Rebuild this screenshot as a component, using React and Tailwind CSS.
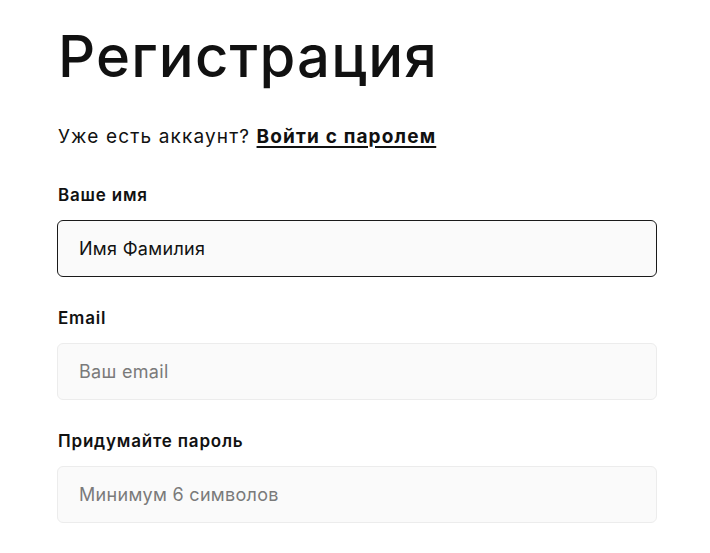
import React from "react";

const field =
  "w-full h-[57px] rounded-[6px] bg-[#fafafa] px-[21px] text-[18px] tracking-[0.3px] text-[#111] placeholder:text-[#7a7a7a] outline-none";

export default function App() {
  return (
    <div className="min-h-screen bg-white font-['Inter','Liberation_Sans',sans-serif] text-[#111]">
      <div className="w-[600px] ml-[57px] pt-[18px]">
        {/* Заголовок */}
        <h1 className="text-[58px] leading-[76px] font-medium tracking-[1.2px] pl-[1px]">
          Регистрация
        </h1>

        <p className="mt-[31px] text-[19px] leading-[24px] tracking-[1.15px] pl-[1px]">
          Уже есть аккаунт?{" "}
          <a href="#" className="font-bold underline underline-offset-[3px] decoration-[2px]">
            Войти с паролем
          </a>
        </p>

        {/* Поля формы */}
        <div className="mt-[34px] flex flex-col gap-[29px]">
          <label className="flex flex-col gap-[13px]">
            <span className="text-[17px] leading-[24px] font-semibold tracking-[0.8px] pl-[1px]">Ваше имя</span>
            <input
              className={field + " border border-[#1a1a1a]"}
              defaultValue="Имя Фамилия"
            />
          </label>

          <label className="flex flex-col gap-[13px]">
            <span className="text-[17px] leading-[24px] font-semibold tracking-[0.8px] pl-[1px]">Email</span>
            <input
              className={field + " border border-[#ececec]"}
              placeholder="Ваш email"
            />
          </label>

          <label className="flex flex-col gap-[13px]">
            <span className="text-[17px] leading-[24px] font-semibold tracking-[0.8px] pl-[1px]">Придумайте пароль</span>
            <input
              type="password"
              className={field + " border border-[#ececec]"}
              placeholder="Минимум 6 символов"
            />
          </label>
        </div>
      </div>
    </div>
  );
}
